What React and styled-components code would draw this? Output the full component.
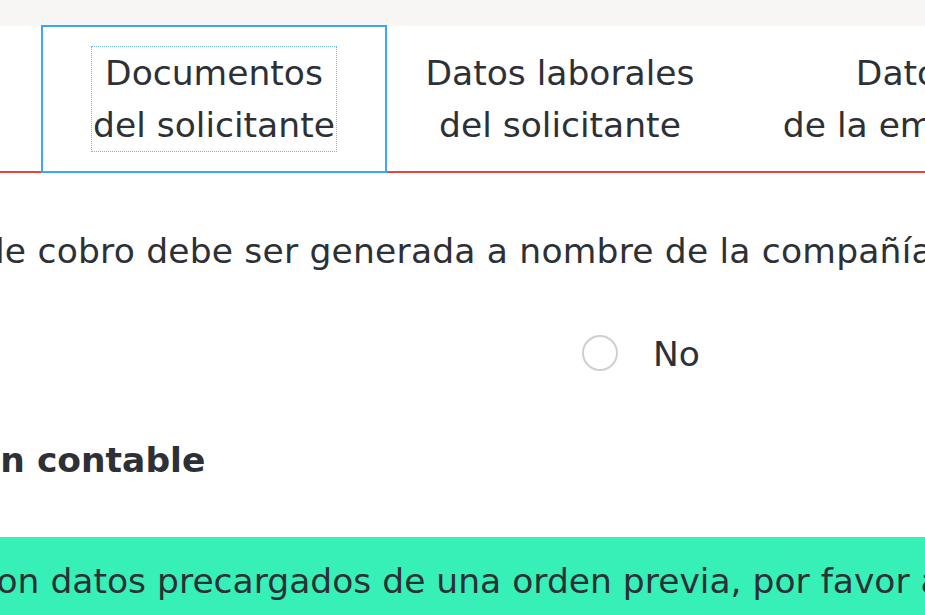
import React from "react";
import styled, { createGlobalStyle } from "styled-components";

const GlobalStyle = createGlobalStyle`
  html, body {
    margin: 0;
    padding: 0;
    background: #ffffff;
    overflow: hidden;
  }
  body {
    font-family: "DejaVu Sans", "Open Sans", sans-serif;
    font-size: 34.5px;
    line-height: 52px;
    color: #2d3035;
  }
`;

const Page = styled.div`
  width: 925px;
  height: 615px;
  overflow: hidden;
  display: flex;
  flex-direction: column;
`;

const TopBar = styled.div`
  height: 26px;
  flex: 0 0 26px;
  background: #f7f6f4;
`;

const TabList = styled.div`
  display: flex;
  height: 145px;
  margin-left: -305px;
  border-bottom: 2px solid #e8453c;
  width: calc(100% + 305px);
`;

const Tab = styled.button`
  flex: 0 0 346px;
  height: ${(p) => (p.$active ? "148px" : "145px")};
  margin: ${(p) => (p.$active ? "-1px 0 -2px" : "0")};
  display: flex;
  align-items: center;
  justify-content: center;
  background: transparent;
  border: ${(p) => (p.$active ? "2px solid #3ea6f7" : "0")};
  padding: 0;
  font: inherit;
  color: inherit;
  text-align: center;
  position: relative;
  z-index: 1;
`;

const TabLabel = styled.span`
  display: inline-block;
  padding: 0 1px;
  outline: ${(p) => (p.$focused ? "1px dotted #6fb6ec" : "none")};
`;

const Section = styled.div`
  display: flex;
  flex-direction: column;
`;

const Question = styled.p`
  margin: 52px 0 0 -181px;
  white-space: nowrap;
  letter-spacing: 0.2px;
`;

const RadioGroup = styled.div`
  display: flex;
  margin: 51px 0 0 -118px;
`;

const RadioOption = styled.label`
  flex: 0 0 700px;
  display: flex;
  align-items: center;
  gap: 35px;
`;

const RadioCircle = styled.span`
  width: 36px;
  height: 36px;
  box-sizing: border-box;
  border: 2px solid #cfcfcf;
  border-radius: 50%;
  background: #ffffff;
  margin-top: -3px;
`;

const Heading = styled.h2`
  margin: 54px 0 0 -208px;
  font-size: 34.5px;
  line-height: 52px;
  font-weight: 700;
  white-space: nowrap;
`;

const Banner = styled.div`
  margin-top: 51px;
  background: #36f0b8;
  padding: 18px 0 30px;
  white-space: nowrap;
`;

const BannerText = styled.p`
  margin: 0 0 0 -519px;
`;

const tabs = [
  ["Datos", "generales"],
  ["Documentos", "del solicitante"],
  ["Datos laborales", "del solicitante"],
  ["Datos", "de la empresa"],
];

export default function App() {
  return (
    <>
      <GlobalStyle />
      <Page>
        <TopBar />
        <TabList role="tablist">
          {tabs.map(([a, b], i) => (
            <Tab key={a + i} role="tab" $active={i === 1}>
              <TabLabel $focused={i === 1}>
                {a}
                <br />
                {b}
              </TabLabel>
            </Tab>
          ))}
        </TabList>
        <Section>
          <Question>
            La orden de cobro debe ser generada a nombre de la compañía solicitante
          </Question>
          <RadioGroup>
            <RadioOption>
              <RadioCircle />
              Sí
            </RadioOption>
            <RadioOption>
              <RadioCircle />
              No
            </RadioOption>
          </RadioGroup>
          <Heading>Información contable</Heading>
        </Section>
        <Banner>
          <BannerText>
            Este formulario se completó con datos precargados de una orden previa, por favor actualice la información
          </BannerText>
        </Banner>
      </Page>
    </>
  );
}
